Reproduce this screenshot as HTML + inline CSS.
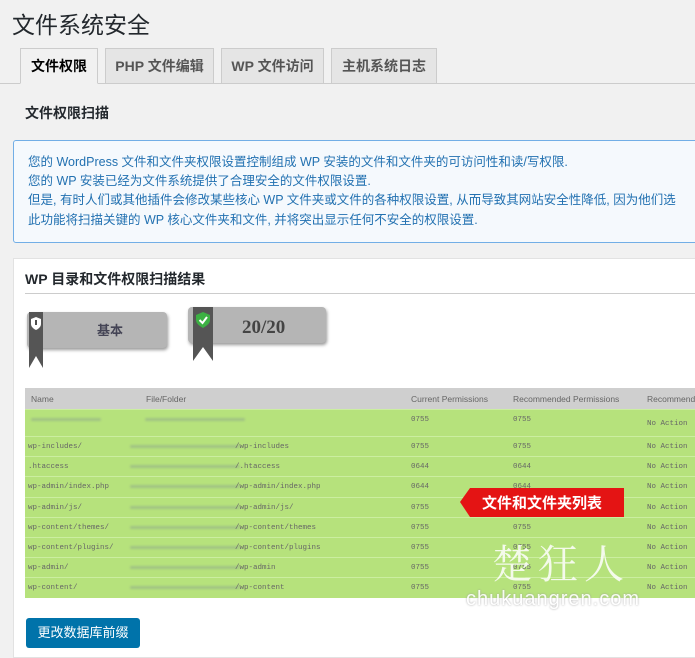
<!DOCTYPE html>
<html><head><meta charset="utf-8"><style>
*{box-sizing:border-box;margin:0;padding:0}
body{width:695px;height:653px;overflow:hidden;background:#f1f1f1;font-family:"Liberation Sans","Noto Sans CJK SC",sans-serif;position:relative;color:#23282d}
.abs{position:absolute}
h1{position:absolute;left:12px;top:6px;font-size:23px;font-weight:400;color:#23282d}
.tabline{left:0;top:83px;width:695px;height:1px;background:#ccc}
.tab{position:absolute;top:48px;height:36px;border:1px solid #ccc;background:#e5e5e5;font-size:14px;font-weight:bold;color:#555;text-align:center;line-height:34px}
.tab.a{background:#f1f1f1;color:#000;border-bottom-color:#f1f1f1}
.info{left:13px;top:140px;width:700px;height:103px;border:1px solid #72aee6;border-radius:3px;background:#f5f9fd;padding:12px 0 0 14px;color:#2271b1;font-size:12.5px;line-height:19.2px;white-space:nowrap;overflow:hidden}
.panel{left:13px;top:258px;width:700px;height:400px;background:#fff;border:1px solid #e2e2e2}
.tbl{left:25px;top:388px;width:680px;font-size:8px;color:#666}
.hdr{height:21px;background:#cfcfcf;position:relative;font-family:"Liberation Sans",sans-serif;font-size:8.5px}
.row{position:relative;height:20.2px;background:#b6e27c;border-top:1px solid #cbeea0;font-family:"Liberation Mono",monospace;font-size:7.5px}
.row span,.hdr span{position:absolute;top:6px}
.blur{position:absolute;top:8px;height:3px;background:#8fa98a;opacity:.55;border-radius:2px;filter:blur(1px)}
</style></head><body>
<h1>文件系统安全</h1>
<div class="abs tabline"></div>
<div class="tab a" style="left:20px;width:78px">文件权限</div>
<div class="tab" style="left:105px;width:109px">PHP 文件编辑</div>
<div class="tab" style="left:221px;width:103px">WP 文件访问</div>
<div class="tab" style="left:331px;width:106px">主机系统日志</div>
<div class="abs" style="left:25px;top:103px;font-size:14px;font-weight:bold;color:#23282d">文件权限扫描</div>
<div class="abs info">您的 WordPress 文件和文件夹权限设置控制组成 WP 安装的文件和文件夹的可访问性和读/写权限.<br>您的 WP 安装已经为文件系统提供了合理安全的文件权限设置.<br>但是, 有时人们或其他插件会修改某些核心 WP 文件夹或文件的各种权限设置, 从而导致其网站安全性降低, 因为他们选<br>此功能将扫描关键的 WP 核心文件夹和文件, 并将突出显示任何不安全的权限设置.</div>
<div class="abs panel"></div>
<div class="abs" style="left:25px;top:269px;font-size:14px;font-weight:bold;color:#23282d">WP 目录和文件权限扫描结果</div>
<div class="abs" style="left:25px;top:293px;width:670px;height:1px;background:#ccc"></div>
<div class="abs" style="left:27px;top:312px;width:140px;height:36px;background:#b5b5b5;border-radius:4px;box-shadow:1px 2px 3px #999"></div>
<svg class="abs" style="left:27px;top:312px" width="20" height="57"><polygon points="2,0 16,0 16,56 9,44 2,56" fill="#555"/><path d="M9 5 L14 7 V12 C14 15 11 17 9 18 C7 17 4 15 4 12 V7 Z" fill="#fff"/><rect x="8.2" y="8" width="1.6" height="5" fill="#222"/></svg>
<div class="abs" style="left:97px;top:320px;font-size:13px;font-weight:bold;color:#445">基本</div>
<div class="abs" style="left:188px;top:307px;width:138px;height:36px;background:#b5b5b5;border-radius:4px;box-shadow:1px 2px 3px #999"></div>
<svg class="abs" style="left:191px;top:307px" width="26" height="55"><polygon points="2,0 22,0 22,54 12,40 2,54" fill="#555"/><path d="M12 5 L19 8 V13 C19 17 15 19 12 21 C9 19 5 17 5 13 V8 Z" fill="#3cb043"/><path d="M8.5 13 L11.5 16 L16 10" stroke="#fff" stroke-width="2" fill="none"/></svg>
<div class="abs" style="left:242px;top:317px;font-size:19px;font-weight:bold;color:#444;font-family:'Liberation Serif',serif">20/20</div>
<div class="abs tbl">
<div class="hdr"><span style="left:6px">Name</span><span style="left:121px">File/Folder</span><span style="left:386px">Current Permissions</span><span style="left:488px">Recommended Permissions</span><span style="left:622px">Recommende</span></div>
<div class="row" style="height:27px"><div class="blur" style="left:6px;width:70px"></div><div class="blur" style="left:120px;width:100px"></div><span style="left:386px">0755</span><span style="left:488px">0755</span><span style="left:622px;top:10px">No Action</span></div>
<div class="row"><span style="left:3px">wp-includes/</span><div class="blur" style="left:105px;width:110px"></div><span style="left:210px">/wp-includes</span><span style="left:386px">0755</span><span style="left:488px">0755</span><span style="left:622px">No Action</span></div>
<div class="row"><span style="left:3px">.htaccess</span><div class="blur" style="left:105px;width:110px"></div><span style="left:210px">/.htaccess</span><span style="left:386px">0644</span><span style="left:488px">0644</span><span style="left:622px">No Action</span></div>
<div class="row"><span style="left:3px">wp-admin/index.php</span><div class="blur" style="left:105px;width:110px"></div><span style="left:210px">/wp-admin/index.php</span><span style="left:386px">0644</span><span style="left:488px">0644</span><span style="left:622px">No Action</span></div>
<div class="row"><span style="left:3px">wp-admin/js/</span><div class="blur" style="left:105px;width:110px"></div><span style="left:210px">/wp-admin/js/</span><span style="left:386px">0755</span><span style="left:488px">0755</span><span style="left:622px">No Action</span></div>
<div class="row"><span style="left:3px">wp-content/themes/</span><div class="blur" style="left:105px;width:110px"></div><span style="left:210px">/wp-content/themes</span><span style="left:386px">0755</span><span style="left:488px">0755</span><span style="left:622px">No Action</span></div>
<div class="row"><span style="left:3px">wp-content/plugins/</span><div class="blur" style="left:105px;width:110px"></div><span style="left:210px">/wp-content/plugins</span><span style="left:386px">0755</span><span style="left:488px">0755</span><span style="left:622px">No Action</span></div>
<div class="row"><span style="left:3px">wp-admin/</span><div class="blur" style="left:105px;width:110px"></div><span style="left:210px">/wp-admin</span><span style="left:386px">0755</span><span style="left:488px">0755</span><span style="left:622px">No Action</span></div>
<div class="row"><span style="left:3px">wp-content/</span><div class="blur" style="left:105px;width:110px"></div><span style="left:210px">/wp-content</span><span style="left:386px">0755</span><span style="left:488px">0755</span><span style="left:622px">No Action</span></div>
</div>
<svg class="abs" style="left:460px;top:488px" width="165" height="30"><polygon points="10,0 164,0 164,29 10,29 0,14" fill="#e41414"/></svg>
<div class="abs" style="left:482px;top:492px;font-size:15px;color:#fff;font-weight:bold">文件和文件夹列表</div>
<div class="abs" style="left:492px;top:533px;font-size:40px;color:#fff;opacity:.85;font-family:'Noto Serif CJK SC',serif;letter-spacing:6px">楚狂人</div>
<div class="abs" style="left:466px;top:588px;font-size:20px;color:#fff;opacity:.9;letter-spacing:1px;text-shadow:0 0 2px #999">chukuangren.com</div>
<div class="abs" style="left:26px;top:618px;width:114px;height:30px;background:#0073aa;border-radius:3px;color:#fff;font-size:13px;text-align:center;line-height:30px">更改数据库前缀</div>
</body></html>
